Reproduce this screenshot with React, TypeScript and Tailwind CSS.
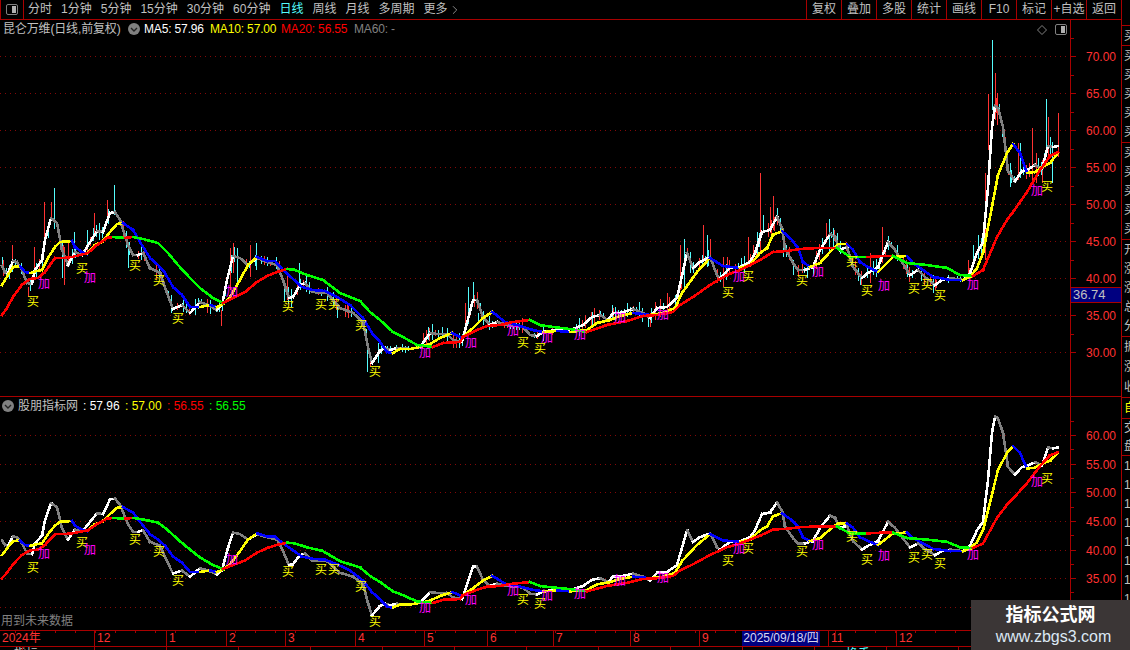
import { ChevronRight } from "lucide-react";

type Pt = [number, number];

// 均线轨迹, 坐标取主图的像素位置
const ma5: Pt[] = [[2,266],[5,272],[8,273],[13,261],[17,262],[22,270],[27,283],[32,284],[35,270],[42,260],[45,240],[51,218],[57,223],[62,250],[68,265],[75,252],[82,255],[87,247],[97,231],[103,232],[110,213],[115,212],[120,220],[128,245],[133,255],[138,255],[143,253],[150,268],[160,273],[167,293],[173,309],[182,305],[190,313],[200,302],[208,305],[217,310],[222,305],[227,280],[233,256],[240,258],[248,265],[257,258],[267,262],[277,265],[283,280],[289,298],[293,297],[300,285],[305,283],[312,292],[327,293],[340,308],[353,313],[363,322],[368,347],[372,363],[380,351],[385,348],[390,350],[397,348],[410,349],[420,347],[430,333],[437,334],[447,334],[453,340],[462,342],[473,300],[477,300],[483,317],[490,325],[497,322],[508,325],[523,327],[530,335],[537,336],[543,332],[557,330],[573,329],[583,325],[592,317],[600,315],[608,320],[613,313],[620,313],[633,309],[643,313],[650,318],[657,308],[667,307],[677,298],[687,253],[693,268],[700,262],[710,257],[717,275],[720,278],[730,268],[740,267],[750,262],[755,253],[762,232],[770,230],[777,217],[782,228],[785,248],[793,263],[798,270],[805,270],[813,267],[820,250],[830,234],[835,237],[840,250],[847,247],[853,267],[862,278],[868,273],[878,267],[888,242],[895,250],[902,262],[910,275],[918,270],[925,277],[935,285],[942,280],[950,278],[963,280],[970,273],[977,253],[983,242],[988,188],[992,127],[995,106],[998,108],[1003,127],[1008,171],[1015,181],[1022,171],[1027,170],[1035,165],[1042,169],[1048,146],[1053,147],[1058,146]];

const ma10: Pt[] = [[2,285],[8,275],[13,267],[20,266],[25,272],[30,273],[37,271],[42,270],[48,258],[55,247],[60,242],[72,241],[75,247],[82,252],[87,254],[95,245],[102,242],[110,232],[117,224],[123,223],[133,230],[140,242],[150,258],[158,265],[165,273],[173,287],[182,295],[190,307],[200,307],[210,305],[217,307],[223,304],[230,297],[240,280],[248,265],[257,257],[267,261],[275,261],[283,270],[292,278],[302,287],[313,290],[325,291],[337,297],[350,305],[363,318],[372,333],[380,342],[387,352],[393,353],[400,349],[410,349],[420,347],[430,344],[440,338],[452,333],[460,337],[463,337],[473,328],[483,318],[492,312],[495,314],[505,322],[520,326],[533,330],[543,332],[557,331],[570,332],[587,330],[597,323],[610,320],[620,316],[633,313],[643,314],[650,315],[663,313],[675,308],[682,293],[697,272],[710,258],[723,266],[740,268],[750,265],[760,253],[767,248],[773,235],[782,231],[792,240],[798,248],[803,262],[810,267],[820,263],[830,252],[838,244],[847,244],[853,250],[860,262],[868,267],[878,272],[887,263],[893,257],[907,256],[913,263],[923,270],[933,277],[940,278],[950,280],[963,280],[970,277],[977,268],[983,253],[990,217],[998,175],[1007,153],[1013,144],[1020,153],[1027,173],[1035,172],[1042,167],[1050,163],[1058,153]];

const ma20: Pt[] = [[2,315],[7,308],[13,297],[22,285],[30,279],[38,278],[45,272],[55,258],[63,258],[72,257],[80,255],[88,253],[97,245],[107,238],[113,237],[125,238],[133,237],[143,239],[158,243],[168,253],[178,265],[190,278],[200,288],[213,298],[223,303],[233,298],[245,292],[257,282],[267,276],[277,272],[287,269],[295,270],[307,275],[323,280],[340,293],[360,301],[370,312],[380,320],[393,332],[403,337],[417,345],[433,347],[443,343],[460,342],[463,337],[477,330],[487,326],[500,325],[513,322],[530,320],[540,325],[553,327],[570,329],[587,332],[607,325],[627,321],[643,316],[657,315],[673,312],[680,305],[693,297],[710,285],[727,275],[740,270],[750,265],[760,260],[773,252],[787,251],[800,249],[817,248],[837,248],[850,257],[867,257],[883,256],[893,256],[907,263],[927,265],[947,268],[960,275],[973,276],[983,270],[997,237],[1007,220],[1013,212],[1027,192],[1040,170],[1050,156],[1058,152]];

// 长影线: x, 上, 下, 红/青
const spikes: [number, number, number, "r" | "c"][] = [
  [44,202,240,"r"],[51,202,220,"r"],[54,188,220,"c"],[107,200,217,"r"],[114,185,213,"c"],[94,213,233,"r"],[87,230,247,"c"],[64,247,285,"r"],[62,240,278,"c"],[74,232,250,"c"],[68,240,263,"r"],[34,247,270,"r"],[12,245,263,"r"],[28,287,297,"r"],[2,257,267,"c"],[128,245,268,"c"],[221,310,326,"r"],[230,248,290,"r"],[233,243,273,"r"],[237,248,287,"c"],[250,245,277,"r"],[256,243,270,"c"],[284,287,302,"c"],[287,275,300,"r"],[299,263,285,"c"],[337,303,318,"c"],[347,303,313,"r"],[367,343,372,"c"],[370,353,367,"r"],[378,343,363,"c"],
  [468,287,313,"c"],[473,282,303,"c"],[465,303,327,"r"],[478,313,323,"c"],[428,327,340,"c"],[423,333,347,"r"],[442,327,337,"c"],[594,308,323,"r"],[592,312,327,"c"],[599,310,320,"r"],[613,308,320,"r"],[627,303,317,"c"],[650,313,327,"r"],[648,315,327,"c"],[655,302,320,"r"],[667,293,313,"r"],[680,245,290,"r"],[684,239,287,"c"],[690,252,273,"c"],[703,225,260,"r"],[707,235,267,"c"],[710,239,260,"r"],[723,257,287,"r"],[727,257,277,"r"],[748,237,263,"r"],[753,245,263,"r"],[757,232,257,"c"],
  [760,173,253,"r"],[763,215,233,"c"],[770,207,233,"r"],[773,196,230,"r"],[777,208,220,"c"],[783,233,257,"c"],[793,260,275,"c"],[802,263,273,"r"],[807,267,278,"c"],[829,219,253,"c"],[826,223,243,"r"],[833,228,250,"c"],[860,277,285,"c"],[870,253,283,"r"],[882,227,263,"r"],[907,263,277,"c"],[933,275,293,"c"],[935,277,290,"r"],[973,245,267,"c"],[968,260,277,"r"],[985,227,260,"r"],[985,173,213,"r"],[978,235,253,"c"],
  [988,94,150,"r"],[992,40,110,"c"],[995,73,120,"r"],[997,93,125,"r"],[1002,120,137,"c"],[1010,163,187,"c"],[1018,143,180,"r"],[1020,143,177,"c"],[1032,128,183,"r"],[1036,153,183,"r"],[1052,142,183,"c"],[1046,99,147,"c"],[1048,117,157,"r"],[1058,113,157,"r"],[1042,160,183,"r"],
];

const buys: Pt[] = [[33,302],[82,269],[135,266],[159,281],[178,319],[288,307],[321,305],[334,305],[361,326],[375,372],[523,343],[540,349],[728,293],[748,277],[802,281],[852,262],[867,291],[914,289],[927,285],[940,296],[1047,187]];
const adds: Pt[] = [[44,284],[90,278],[232,292],[425,353],[471,343],[513,331],[547,338],[580,335],[620,318],[663,315],[739,277],[818,272],[884,286],[973,285],[1037,191]];

const topTicks = [70, 65, 60, 55, 50, 45, 40, 35, 30];
const bottomTicks = [60, 55, 50, 45, 40, 35, 30];
const priceY = (p: number) => 278.5 - (p - 40) * 7.4;
const subY = (y: number) => 550 + (y - 278.5) * 0.773;

const interp = (pts: Pt[], x: number) => {
  for (let i = 1; i < pts.length; i++) {
    if (x <= pts[i][0]) {
      const [x0, y0] = pts[i - 1];
      const [x1, y1] = pts[i];
      return y0 + ((x - x0) / (x1 - x0)) * (y1 - y0);
    }
  }
  return pts[pts.length - 1][1];
};

// 小K线, 用固定的伪随机生成, 大部分被均线盖住
const smallCandles = () => {
  const out: { x: number; t: number; b: number; c: string }[] = [];
  let seed = 17;
  for (let x = 3; x <= 1058; x += 3) {
    seed = (seed * 137 + 59) % 1009;
    if (seed % 3 === 0) continue;
    const y = interp(ma5, x);
    const flat = Math.abs(interp(ma5, x + 6) - interp(ma5, x - 6)) < 4;
    const up = (flat ? 2 : 4) + (seed % (flat ? 3 : 6));
    const down = (flat ? 2 : 4) + ((seed >> 3) % (flat ? 3 : 6));
    out.push({ x, t: y - up, b: y + down, c: seed % 5 < 2 ? "#ff3232" : "#54fcfc" });
  }
  return out;
};

function MaLine({ pts, up, down, map }: { pts: Pt[]; up: string; down: string; map: (y: number) => number }) {
  let last = up;
  return (
    <g strokeWidth={2.6} strokeLinecap="square">
      {pts.slice(1).map((p, i) => {
        const a = pts[i];
        if (p[1] < a[1]) last = up;
        if (p[1] > a[1]) last = down;
        return <line key={i} x1={a[0]} y1={map(a[1])} x2={p[0]} y2={map(p[1])} stroke={last} />;
      })}
    </g>
  );
}

function Marks({ map }: { map: (y: number) => number }) {
  return (
    <g fontSize={12} textAnchor="middle" dominantBaseline="central">
      {buys.map((p, i) => (
        <text key={i} x={p[0]} y={map(p[1])} fill="#ffff00">买</text>
      ))}
      {adds.map((p, i) => (
        <text key={i} x={p[0]} y={map(p[1])} fill="#ff00ff">加</text>
      ))}
    </g>
  );
}

function Lines({ map }: { map: (y: number) => number }) {
  return (
    <g shapeRendering="crispEdges">
      <MaLine pts={ma5} up="#ffffff" down="#808080" map={map} />
      <MaLine pts={ma10} up="#ffff00" down="#0000ff" map={map} />
      <MaLine pts={ma20} up="#ff0000" down="#00ff00" map={map} />
    </g>
  );
}

function Grid({ ys }: { ys: number[] }) {
  return (
    <g stroke="#840808" strokeDasharray="1 4" shapeRendering="crispEdges">
      {ys.map((y) => (
        <line key={y} x1={0} x2={1066} y1={y} y2={y} />
      ))}
    </g>
  );
}

function Axis({ ticks, y, top, height }: { ticks: number[]; y: (p: number) => number; top: number; height: number }) {
  const step = y(ticks[1]) - y(ticks[0]);
  return (
    <svg width={50} height={height} viewBox={`1071 ${top} 50 ${height}`} className="block">
      {ticks.map((t) => (
        <g key={t}>
          <line x1={1071} x2={1076} y1={y(t)} y2={y(t)} stroke="#a80000" shapeRendering="crispEdges" />
          <line x1={1071} x2={1074} y1={y(t) - step / 2} y2={y(t) - step / 2} stroke="#a80000" shapeRendering="crispEdges" />
          <text x={1116} y={y(t) + 4.5} fontSize={12} textAnchor="end" fill="#ff3232">{t}.00</text>
        </g>
      ))}
    </svg>
  );
}

function RoundIcon() {
  return (
    <svg width={12} height={12} viewBox="0 0 12 12" className="shrink-0">
      <circle cx={6} cy={6} r={6} fill="#808080" />
      <path d="M3 5 L6 8 L9 5" fill="none" stroke="#222" strokeWidth={1.4} />
    </svg>
  );
}

function PanelIcon({ color = "#808080" }: { color?: string }) {
  return (
    <svg width={12} height={11} viewBox="0 0 12 11">
      <rect x={0.5} y={0.5} width={11} height={10} rx={1.5} fill="none" stroke={color} />
      <rect x={6} y={2} width={4} height={7} fill="#b0b0b0" />
    </svg>
  );
}

const leftTabs = ["分时", "1分钟", "5分钟", "15分钟", "30分钟", "60分钟", "日线", "周线", "月线", "多周期"];
const rightTabs = ["复权", "叠加", "多股", "统计", "画线", "F10", "标记", "+自选", "返回"];

function Toolbar() {
  return (
    <div className="flex h-5 border-b border-[#a80000] text-[12px] leading-[19px] text-[#c0c0c0]">
      <div className="flex w-6 items-center justify-center border-x border-[#a80000]">
        <PanelIcon />
      </div>
      <div className="ml-1 flex gap-[9px]">
        {leftTabs.map((t) => (
          <span key={t} className={t === "日线" ? "text-[#54fcfc]" : ""}>{t}</span>
        ))}
        <span className="flex items-center">
          更多
          <ChevronRight size={14} strokeWidth={1.2} />
        </span>
      </div>
      <div className="ml-auto flex">
        {rightTabs.map((t) => (
          <span key={t} className="w-[35px] border-l border-[#a80000] text-center">{t}</span>
        ))}
      </div>
    </div>
  );
}

function MainPane() {
  const ys = topTicks.map(priceY);
  return (
    <div className="flex h-[377px] border-b border-[#a80000]">
      <div className="relative w-[1071px] border-r border-[#a80000]">
        <svg width={1070} height={376} viewBox="0 20 1070 376" className="block">
          <Grid ys={ys} />
          <g shapeRendering="crispEdges">
            {smallCandles().map((c) => (
              <line key={c.x} x1={c.x + 0.5} x2={c.x + 0.5} y1={c.t} y2={c.b} stroke={c.c} />
            ))}
            {spikes.map((s, i) => (
              <line key={i} x1={s[0] + 0.5} x2={s[0] + 0.5} y1={s[1]} y2={s[2]} stroke={s[3] === "r" ? "#ff3232" : "#54fcfc"} />
            ))}
          </g>
          <Lines map={(y) => y} />
          <Marks map={(y) => y} />
        </svg>
        <div className="absolute left-[3px] top-0 flex h-[18px] items-center whitespace-nowrap text-[12px] tracking-[-0.15px]">
          <span className="w-[120px] text-[#c0c0c0]">昆仑万维(日线,前复权)</span>
          <span className="ml-[5px]"><RoundIcon /></span>
          <span className="ml-1 w-[66px] text-white">MA5: 57.96</span>
          <span className="w-[71px] text-[#ffff00]">MA10: 57.00</span>
          <span className="w-[73px] text-[#ff0000]">MA20: 56.55</span>
          <span className="text-[#808080]">MA60: -</span>
        </div>
        <div className="absolute right-[3px] top-[4px] flex items-center gap-2">
          <svg width={10} height={10} viewBox="0 0 10 10">
            <path d="M5 0.5 L9.5 5 L5 9.5 L0.5 5 Z" fill="none" stroke="#808080" />
          </svg>
          <PanelIcon />
        </div>
      </div>
      <div className="relative">
        <Axis ticks={topTicks} y={priceY} top={20} height={376} />
        <div className="absolute left-0 top-[267px] h-4 w-[50px] border-y border-[#a80000] bg-[#000080] pl-[2px] text-[13px] leading-[14px] text-[#c0c0c0]">
          36.74
        </div>
      </div>
    </div>
  );
}

function SubPane() {
  const y = (p: number) => 550 - (p - 40) * 5.72;
  return (
    <div className="flex h-[234px] border-b border-[#a80000]">
      <div className="relative w-[1071px] border-r border-[#a80000]">
        <svg width={1070} height={233} viewBox="0 397 1070 233" className="block">
          <Grid ys={bottomTicks.map(y)} />
          <Lines map={subY} />
          <Marks map={subY} />
        </svg>
        <div className="absolute left-[2px] top-0 flex h-[17px] items-center whitespace-nowrap text-[12px]">
          <RoundIcon />
          <span className="ml-1 w-[65px] text-[#c0c0c0]">股朋指标网</span>
          <span className="w-[42px] text-white">: 57.96</span>
          <span className="w-[42px] text-[#ffff00]">: 57.00</span>
          <span className="w-[42px] text-[#ff0000]">: 56.55</span>
          <span className="w-[42px] text-[#00ff00]">: 56.55</span>
        </div>
        <span className="absolute bottom-0 left-[1px] text-[12px] text-[#808080]">用到未来数据</span>
      </div>
      <Axis ticks={bottomTicks} y={y} top={397} height={233} />
    </div>
  );
}

const months = [
  { label: "2024年", w: 94 },
  { label: "12", w: 72 },
  { label: "1", w: 60 },
  { label: "2", w: 59 },
  { label: "3", w: 70 },
  { label: "4", w: 69 },
  { label: "5", w: 63 },
  { label: "6", w: 66 },
  { label: "7", w: 77 },
  { label: "8", w: 69 },
  { label: "9", w: 43 },
];

function TimeAxis() {
  return (
    <div className="relative flex h-4 border-b border-[#a80000] text-[12px] leading-[15px] text-[#ff3232]">
      {months.map((m, i) => (
        <span key={m.label} style={{ width: m.w }} className={`pl-[2px] ${i > 0 ? "border-l border-[#a80000]" : ""}`}>
          {m.label}
        </span>
      ))}
      <span className="w-[78px] whitespace-nowrap bg-[#000080] text-center text-[#d8d8f0]">2025/09/18/四</span>
      <span className="w-2" />
      <span className="w-[68px] border-l border-[#a80000] pl-[2px]">11</span>
      <span className="flex-1 border-l border-[#a80000] pl-[2px]">12</span>
      <svg className="absolute left-0 top-0" width={1000} height={3}>
        {Array.from({ length: 50 }, (_, i) => (
          <line key={i} x1={i * 20 + 15.5} x2={i * 20 + 15.5} y1={0} y2={2} stroke="#a80000" />
        ))}
      </svg>
    </div>
  );
}

function Footer() {
  return (
    <div className="relative h-[3px] overflow-hidden text-[12px] leading-[14px] text-[#c0c0c0]">
      <span className="absolute left-[14px] top-0">指标</span>
      <span className="absolute left-[846px] top-0 text-[#54fcfc]">换手</span>
      <svg className="absolute left-0 top-0" width={1000} height={3}>
        {Array.from({ length: 14 }, (_, i) => (
          <line key={i} x1={i * 72 + 22.5} x2={i * 72 + 22.5} y1={0} y2={3} stroke="#a80000" />
        ))}
      </svg>
    </div>
  );
}

const sideGroups = [
  { chars: "买", h: 20 },
  { chars: "买买买买买", h: 97 },
  { chars: "买买买买买", h: 97 },
  { chars: "开涨涨总分", h: 97 },
  { chars: "振涨收", h: 61 },
];

function SidePanel() {
  return (
    <div className="flex w-2 flex-col overflow-hidden text-[12px] leading-none text-[#c0c0c0]">
      <div className="h-[25px] shrink-0" />
      {sideGroups.map((g, i) => (
        <div key={i} style={{ height: g.h }} className="flex shrink-0 flex-col justify-around border-t border-[#a80000] pl-[2px]">
          {g.chars.split("").map((c, j) => (
            <span key={j} className="block w-3">{c}</span>
          ))}
        </div>
      ))}
      <div className="h-[21px] shrink-0 border-t border-[#a80000] pl-[2px] leading-5 text-[#ffff00]"><span className="block w-3">自</span></div>
      <div className="flex h-[38px] shrink-0 flex-col justify-around border-y border-[#a80000] pl-[2px]">
        <span className="block w-3">交</span>
        <span className="block w-3">盘</span>
      </div>
      <div className="flex flex-col gap-[7px] pl-[2px] pt-[4px]">
        {Array.from({ length: 9 }, (_, i) => (
          <span key={i} className="block">1</span>
        ))}
      </div>
    </div>
  );
}

export default function App() {
  return (
    <div className="relative flex h-[650px] w-[1130px] overflow-hidden bg-black font-['Liberation_Sans','Noto_Sans_CJK_SC',sans-serif]">
      <div className="w-[1122px] border-r border-[#a80000]">
        <Toolbar />
        <MainPane />
        <SubPane />
        <TimeAxis />
        <Footer />
      </div>
      <SidePanel />
      <div className="absolute bottom-0 right-0 flex h-[50px] w-[159px] flex-col items-center justify-center bg-[#3b3636]">
        <span className="text-[18px] font-bold leading-[24px] text-white">指标公式网</span>
        <span className="ml-[6px] text-[16px] leading-[20px] text-[#dce8f4]">www.zbgs3.com</span>
      </div>
    </div>
  );
}
